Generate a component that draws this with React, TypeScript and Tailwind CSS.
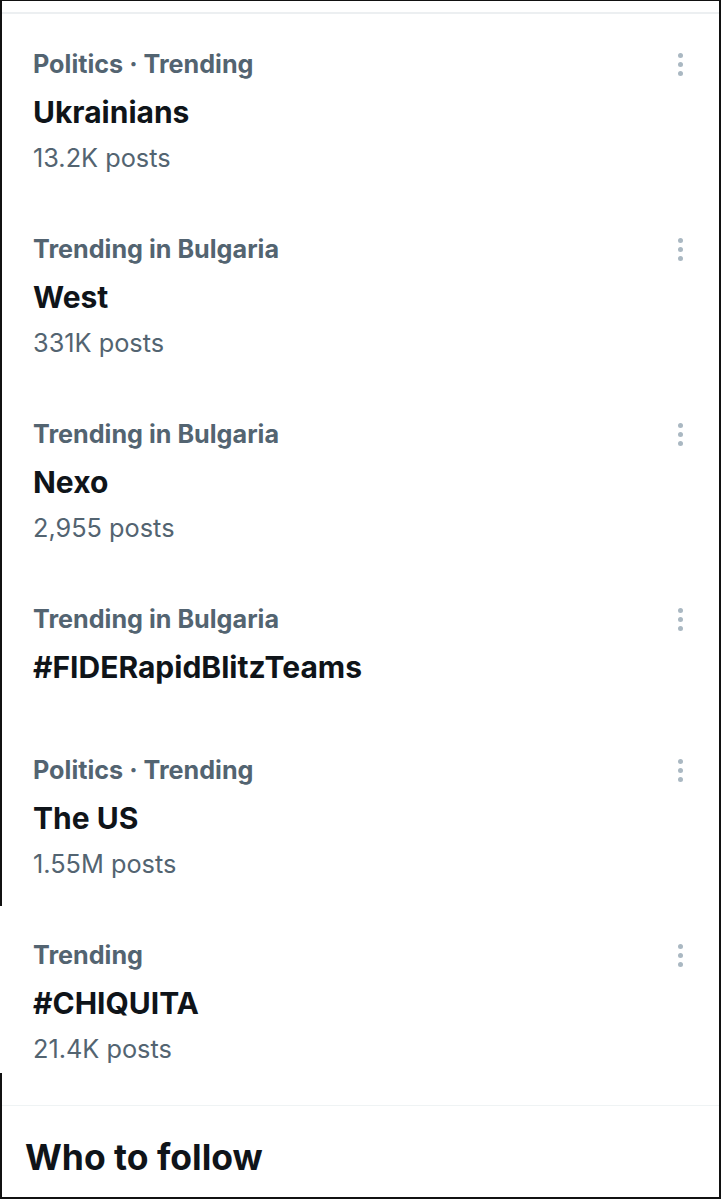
import React from "react";

interface Trend {
  context: string;
  title: string;
  posts?: string;
}

const trends: Trend[] = [
  { context: "Politics · Trending", title: "Ukrainians", posts: "13.2K posts" },
  { context: "Trending in Bulgaria", title: "West", posts: "331K posts" },
  { context: "Trending in Bulgaria", title: "Nexo", posts: "2,955 posts" },
  { context: "Trending in Bulgaria", title: "#FIDERapidBlitzTeams" },
  { context: "Politics · Trending", title: "The US", posts: "1.55M posts" },
  { context: "Trending", title: "#CHIQUITA", posts: "21.4K posts" },
];

function MoreDots() {
  return (
    <div className="flex h-[48px] w-[40px] flex-col items-center justify-center gap-[4px]">
      <span className="h-[5px] w-[5px] rounded-full bg-[#aab8c2]" />
      <span className="h-[5px] w-[5px] rounded-full bg-[#aab8c2]" />
      <span className="h-[5px] w-[5px] rounded-full bg-[#aab8c2]" />
    </div>
  );
}

function TrendRow({ trend, className }: { trend: Trend; className: string }) {
  return (
    <div className={`flex items-start justify-between pl-[31px] pr-[19px] ${className}`}>
      <div className="flex flex-col">
        <div className="text-[25.2px] font-bold leading-[48px] text-[#536471]">{trend.context}</div>
        <div className="text-[30px] font-bold leading-[48px] text-[#0f1419]">{trend.title}</div>
        {trend.posts && (
          <div className="text-[25.3px] leading-[44px] text-[#536471]">{trend.posts}</div>
        )}
      </div>
      <MoreDots />
    </div>
  );
}

export default function App() {
  return (
    <div
      className="w-[721px] border-t border-r-2 border-b-2 border-[#111] bg-white"
      style={{ fontFamily: "Inter, 'Liberation Sans', sans-serif" }}
    >
      <div className="border-l-2 border-[#111]">
        <div className="h-[11px]" />
        <div className="h-[2px] bg-[#eceff1]" />
        <TrendRow trend={trends[0]} className="pt-[26px] pb-[20px]" />
        <TrendRow trend={trends[1]} className="pt-[25px] pb-[20px]" />
        <TrendRow trend={trends[2]} className="pt-[25px] pb-[20px]" />
        <TrendRow trend={trends[3]} className="pt-[25px] pb-[30px]" />
        <TrendRow trend={trends[4]} className="pt-[25px] pb-[20px]" />
      </div>
      <div className="border-l-2 border-transparent">
        <TrendRow trend={trends[5]} className="pt-[25px] pb-[2px]" />
      </div>
      <div className="border-l-2 border-[#111] pt-[32px]">
        <div className="h-px bg-[#eff3f4]" />
        <div className="pt-[24px] pb-[11px] pl-[23px]">
          <h2 className="text-[35.5px] font-bold leading-[56px] text-[#0f1419]">Who to follow</h2>
        </div>
      </div>
    </div>
  );
}
